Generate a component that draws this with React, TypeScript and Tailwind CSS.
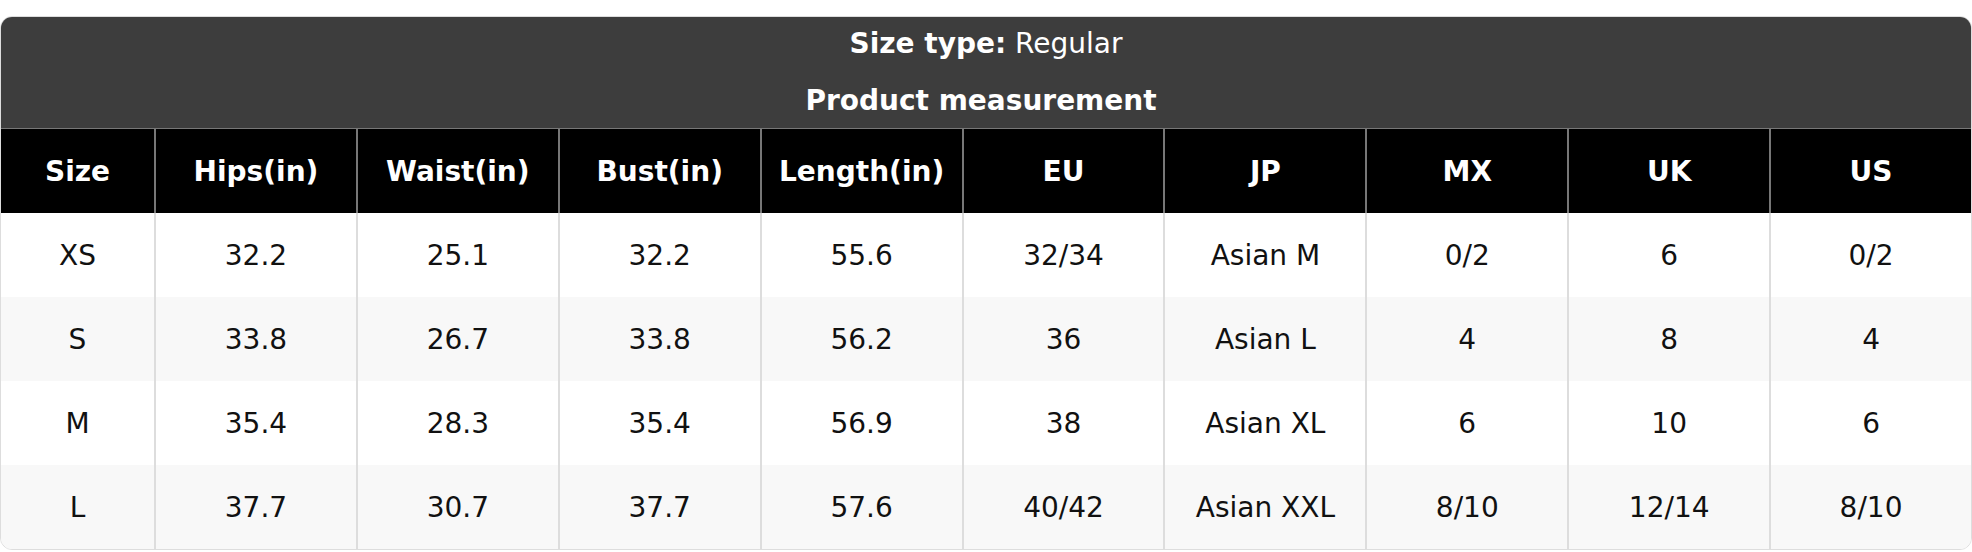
import React from "react";

const headers = ["Size", "Hips(in)", "Waist(in)", "Bust(in)", "Length(in)", "EU", "JP", "MX", "UK", "US"];
const rows = [
  ["XS", "32.2", "25.1", "32.2", "55.6", "32/34", "Asian M", "0/2", "6", "0/2"],
  ["S", "33.8", "26.7", "33.8", "56.2", "36", "Asian L", "4", "8", "4"],
  ["M", "35.4", "28.3", "35.4", "56.9", "38", "Asian XL", "6", "10", "6"],
  ["L", "37.7", "30.7", "37.7", "57.6", "40/42", "Asian XXL", "8/10", "12/14", "8/10"],
];

export default function App() {
  return (
    <div className="bg-white w-[1972px] h-[552px] pt-4" style={{ fontFamily: '"DejaVu Sans", sans-serif' }}>
      <div className="rounded-[12px] overflow-hidden border border-[#dddddd] bg-white">
        <div className="bg-[#3d3d3d] text-white text-center h-[111px] flex flex-col">
          <div className="text-[28px] leading-[42px] mt-[6px]">
            <span className="font-bold">Size type:</span> Regular
          </div>
          <div className="text-[28px] leading-[42px] font-bold mt-[15px] pr-[10px]">Product measurement</div>
        </div>
        <div className="grid grid-cols-[153px_repeat(9,1fr)] border-t border-[#777777]">
          {headers.map((h, i) => (
            <div
              key={h}
              className={`bg-black text-white font-bold text-[28px] h-[84px] pt-[2px] flex items-center justify-center ${i > 0 ? "border-l-2 border-[#777777]" : ""}`}
            >
              {h}
            </div>
          ))}
          {rows.map((r, ri) =>
            r.map((c, ci) => (
              <div
                key={ri + "-" + ci}
                className={`text-[28px] text-[#111111] h-[84px] pt-[2px] flex items-center justify-center ${ri % 2 === 1 ? "bg-[#f8f8f8]" : "bg-white"} ${ci > 0 ? "border-l-2 border-[#dddddd]" : ""}`}
              >
                {c}
              </div>
            ))
          )}
        </div>
      </div>
    </div>
  );
}
